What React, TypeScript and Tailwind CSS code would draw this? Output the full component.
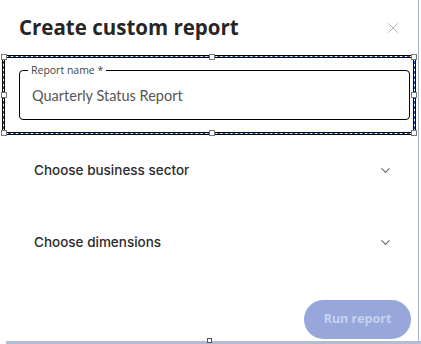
import { ChevronDown, X } from "lucide-react";

function Handle({ className }: { className: string }) {
  return <span className={`absolute w-[6px] h-[6px] bg-white border border-[#777] ${className}`} />;
}

function Section({ label }: { label: string }) {
  return (
    <div className="flex items-center justify-between h-[72px] pl-[34px] pr-[25px]">
      <span className="text-[13.5px] font-medium text-[#2b2b2b]" style={{ fontFamily: "Inter, sans-serif" }}>
        {label}
      </span>
      <ChevronDown className="w-[15px] h-[15px] text-[#666]" strokeWidth={1.75} />
    </div>
  );
}

export default function App() {
  return (
    <div className="w-[421px] h-[344px] bg-white overflow-hidden" style={{ fontFamily: "'Open Sans', Lato, sans-serif" }}>
      <div className="w-[419px] h-[341px] border-r border-[#a7b1c4] flex flex-col relative">
        {/* header */}
        <div className="flex items-center justify-between pl-[19px] pr-[16px] h-[55px]">
          <h1 className="text-[20.5px] font-bold text-[#262626]">Create custom report</h1>
          <X className="w-[18px] h-[18px] text-[#b5b5b5]" strokeWidth={1.3} />
        </div>

        {/* selected field */}
        <div className="relative mx-[2px] h-[80px] border-[3px] border-black pl-[14px] pr-[3px] pt-[6px]">
          <div className="absolute -inset-[2px] border border-white pointer-events-none" />
          <div className="absolute -inset-[2px] border border-dashed border-[#1c5bb0] pointer-events-none" />
          <Handle className="-left-[4px] -top-[4px]" />
          <Handle className="left-[204px] -top-[4px]" />
          <Handle className="-right-[4px] -top-[4px]" />
          <Handle className="-left-[4px] top-[34px]" />
          <Handle className="-right-[4px] top-[34px]" />
          <Handle className="-left-[4px] -bottom-[4px]" />
          <Handle className="left-[204px] -bottom-[4px]" />
          <Handle className="-right-[4px] -bottom-[4px]" />

          <fieldset className="h-[56px] border border-black rounded-[4px] px-[8px]">
            <legend className="text-[10.5px] text-[#444] px-[3px] leading-[12px]">Report name *</legend>
            <div className="text-[14.5px] text-[#555] pl-[4px] pt-[9px]" style={{ fontFamily: "Lato, sans-serif" }}>
              Quarterly Status Report
            </div>
          </fieldset>
        </div>

        <div className="-mt-[1px]">
          <Section label="Choose business sector" />
          <Section label="Choose dimensions" />
        </div>

        <div className="flex justify-end pr-[7px] mt-[22px]">
          <button className="w-[107px] h-[39px] rounded-full bg-[#97a7dc] text-[#c9d1ef] text-[12.5px] font-bold">
            Run report
          </button>
        </div>
      </div>
      <div className="relative h-[3px] ml-[6px] bg-[#b3bdd1]">
        <span className="absolute left-[201px] -top-[3px] w-[5px] h-[5px] bg-white border border-[#555]" />
      </div>
    </div>
  );
}
